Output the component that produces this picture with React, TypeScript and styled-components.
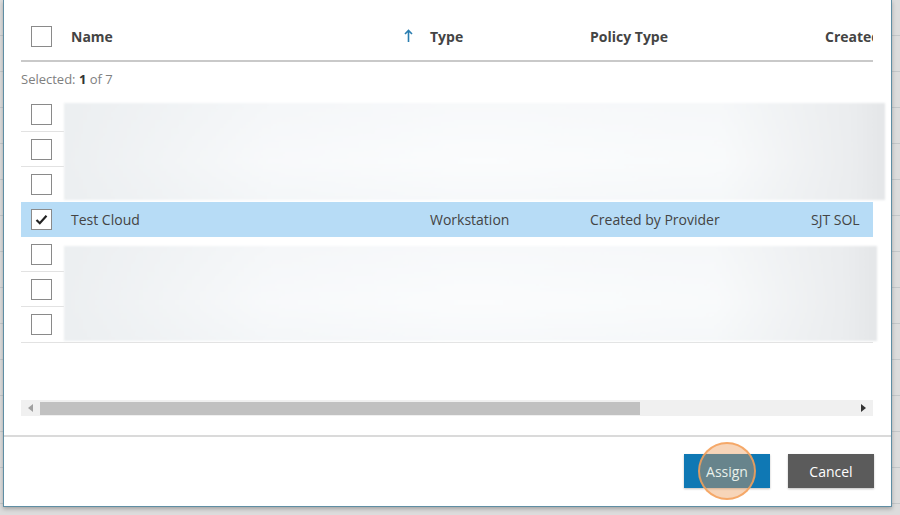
import styled, { createGlobalStyle } from "styled-components"

const GlobalStyle = createGlobalStyle`
  html, body {
    margin: 0;
    padding: 0;
    width: 900px;
    height: 515px;
    overflow: hidden;
    font-family: 'Open Sans', 'Liberation Sans', sans-serif;
    background: #dcdcdc;
    background-image: repeating-linear-gradient(
      to bottom,
      transparent 0,
      transparent 35px,
      #c4c8ca 35px,
      #c4c8ca 36px
    );
  }
`

const Backdrop = styled.div`
  width: 900px;
  height: 515px;
  padding-left: 3px;
  box-sizing: border-box;
`

const Dialog = styled.div`
  position: relative;
  width: 889px;
  height: 507px;
  box-sizing: border-box;
  background: #fff;
  border: 1px solid #5f8ea4;
  border-top: none;
  box-shadow: 0 2px 4px rgba(0, 0, 0, 0.25);
  display: flex;
  flex-direction: column;
`

const Body = styled.div`
  padding: 12px 17px 0 17px;
  height: 435px;
  box-sizing: border-box;
`

const Grid = styled.div`
  display: grid;
  grid-template-columns: 43px 359px 160px 221px 69px;
  width: 852px;
  overflow: hidden;
`

const HeadRow = styled(Grid)`
  height: 48px;
  border-bottom: 2px solid #c9c9c9;
  align-items: center;
`

const HeadCell = styled.div<{ $pad?: number }>`
  font-size: 14px;
  font-weight: 700;
  color: #444;
  padding-left: ${p => p.$pad ?? 7}px;
  white-space: nowrap;
  overflow: hidden;
  display: flex;
  align-items: center;
`

const SortArrow = styled.svg`
  margin-left: auto;
  margin-right: 10px;
`

const BoxCell = styled.div`
  padding-left: 10px;
  display: flex;
  align-items: center;
`

const Box = styled.div`
  width: 19px;
  height: 19px;
  border: 1px solid #8a8a8a;
  background: #fff;
  display: flex;
  align-items: center;
  justify-content: center;
`

const Selected = styled.div`
  font-size: 13px;
  color: #808080;
  padding-top: 8px;
  height: 35px;
  box-sizing: border-box;
  b {
    color: #333;
    font-weight: 700;
  }
`

const Group = styled.div`
  position: relative;
  width: 852px;
`

const CheckRow = styled.div<{ $last?: boolean }>`
  width: 43px;
  height: 35px;
  display: flex;
  align-items: center;
  padding-left: 10px;
  box-sizing: border-box;
  border-bottom: 1px solid ${p => (p.$last ? "transparent" : "#e2e2e2")};
`

// blurred placeholder over the rows that are hidden
const Redacted = styled.div<{ $top: number; $bottom: number; $right: number }>`
  position: absolute;
  left: 43px;
  top: ${p => p.$top}px;
  bottom: ${p => p.$bottom}px;
  right: ${p => p.$right}px;
  background:
    linear-gradient(90deg, rgba(235,238,240,0.9) 0%, rgba(246,248,250,0.55) 25%, rgba(252,253,254,0.5) 50%, rgba(248,250,251,0.55) 80%, rgba(234,236,238,0.95) 96%, rgba(228,230,232,1) 100%),
    linear-gradient(180deg, #f3f5f7 0%, #fafbfc 60%, #f2f5f7 100%);
  filter: blur(1px);
`

const DataRow = styled(Grid)<{ $active?: boolean }>`
  height: 35px;
  align-items: center;
  background: ${p => (p.$active ? "#b7dcf6" : "#fff")};
`

const DataCell = styled.div`
  font-size: 14px;
  color: #444;
  padding-left: 7px;
  white-space: nowrap;
  overflow: hidden;
`

const TableEnd = styled.div`
  width: 852px;
  border-top: 1px solid #e2e2e2;
`

const ScrollBar = styled.div`
  margin-top: 57px;
  width: 852px;
  height: 16px;
  background: #f0f0f0;
  display: flex;
  align-items: center;
`

const ScrollBtn = styled.div<{ $end?: boolean }>`
  width: 19px;
  height: 16px;
  display: flex;
  align-items: center;
  justify-content: center;
  margin-left: ${p => (p.$end ? "auto" : "0")};
`

const Thumb = styled.div`
  width: 600px;
  height: 13px;
  background: #c1c1c1;
`

const Footer = styled.div`
  flex: 1;
  border-top: 2px solid #dadada;
  display: flex;
  justify-content: flex-end;
  align-items: flex-start;
  gap: 18px;
  padding: 17px 17px 0 0;
`

const Button = styled.button<{ $tone: "primary" | "neutral" }>`
  position: relative;
  width: 86px;
  height: 34px;
  border: none;
  font-family: inherit;
  font-size: 14px;
  color: #fff;
  background: ${p => (p.$tone === "primary" ? "#0f78b4" : "#5b5b5b")};
  box-shadow: 0 1px 2px rgba(0, 0, 0, 0.25);
  cursor: pointer;
`

const ButtonLabel = styled.span`
  position: relative;
  z-index: 2;
  color: #e8f0ea;
`

// click highlight drawn over the button the user pressed
const ClickRing = styled.span`
  position: absolute;
  left: 14px;
  top: -12px;
  width: 54px;
  height: 54px;
  border-radius: 50%;
  border: 2px solid rgba(244, 160, 90, 0.85);
  background: rgba(236, 150, 80, 0.4);
  z-index: 1;
`

const columns = [
  { label: "Name", pad: 7, sort: true },
  { label: "Type", pad: 7 },
  { label: "Policy Type", pad: 7 },
  { label: "Created", pad: 21 },
]

const CheckMark = () => (
  <svg width="13" height="11" viewBox="0 0 13 11">
    <path d="M1.5 6 L4.8 9.2 L11.5 1.8" fill="none" stroke="#222" strokeWidth="2.2" />
  </svg>
)

const App = () => {
  return (
    <>
      <GlobalStyle />
      <Backdrop>
        <Dialog>
          <Body>
            <HeadRow>
              <BoxCell>
                <Box />
              </BoxCell>
              {columns.map(c => (
                <HeadCell key={c.label} $pad={c.pad}>
                  {c.label}
                  {c.sort && (
                    <SortArrow width="9" height="14" viewBox="0 0 9 14">
                      <path d="M4.5 1.5 V13 M1 5 L4.5 1.5 L8 5" fill="none" stroke="#2a7db0" strokeWidth="1.6" />
                    </SortArrow>
                  )}
                </HeadCell>
              ))}
            </HeadRow>

            <Selected>
              Selected: <b>1</b> of 7
            </Selected>

            <Group>
              <CheckRow><Box /></CheckRow>
              <CheckRow><Box /></CheckRow>
              <CheckRow $last><Box /></CheckRow>
              <Redacted $top={6} $bottom={2} $right={-12} />
            </Group>

            <DataRow $active>
              <BoxCell>
                <Box>
                  <CheckMark />
                </Box>
              </BoxCell>
              <DataCell>Test Cloud</DataCell>
              <DataCell>Workstation</DataCell>
              <DataCell>Created by Provider</DataCell>
              <DataCell>SJT SOL</DataCell>
            </DataRow>

            <Group>
              <CheckRow><Box /></CheckRow>
              <CheckRow><Box /></CheckRow>
              <CheckRow $last><Box /></CheckRow>
              <Redacted $top={9} $bottom={1} $right={-4} />
            </Group>
            <TableEnd />

            <ScrollBar>
              <ScrollBtn>
                <svg width="5" height="8" viewBox="0 0 5 8">
                  <path d="M5 0 L0 4 L5 8 Z" fill="#a0a0a0" />
                </svg>
              </ScrollBtn>
              <Thumb />
              <ScrollBtn $end>
                <svg width="5" height="8" viewBox="0 0 5 8">
                  <path d="M0 0 L5 4 L0 8 Z" fill="#333" />
                </svg>
              </ScrollBtn>
            </ScrollBar>
          </Body>

          <Footer>
            <Button $tone="primary">
              <ClickRing />
              <ButtonLabel>Assign</ButtonLabel>
            </Button>
            <Button $tone="neutral">Cancel</Button>
          </Footer>
        </Dialog>
      </Backdrop>
    </>
  )
}

export default App
